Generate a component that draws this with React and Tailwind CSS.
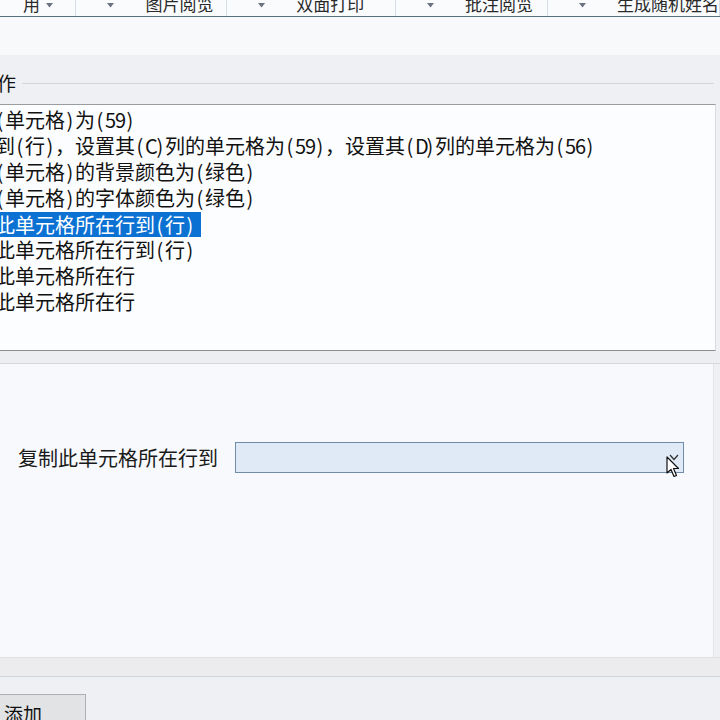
import React from 'react';

const FONT = { fontFamily: '"Noto Sans CJK SC", "Noto Sans", sans-serif' };

const Arrow = () => (
  <svg width="7" height="5" viewBox="0 0 7 5" className="shrink-0">
    <path d="M0 0 L7 0 L3.5 4.5 Z" fill="#6b7280" />
  </svg>
);

const headerCells = [
  { w: 'w-[77px]', text: '用', first: true },
  { w: 'w-[152px]', text: '图片阅览' },
  { w: 'w-[170px]', text: '双面打印' },
  { w: 'w-[153px]', text: '批注阅览' },
  { w: 'flex-1', text: '生成随机姓名' },
];

const items = [
  '(单元格)为(59)',
  '到(行)，设置其(C)列的单元格为(59)，设置其(D)列的单元格为(56)',
  '(单元格)的背景颜色为(绿色)',
  '(单元格)的字体颜色为(绿色)',
  '此单元格所在行到(行)',
  '此单元格所在行到(行)',
  '此单元格所在行',
  '此单元格所在行',
];

// half-width chars take half a cell, like the old dialog font
const renderText = (t) =>
  Array.from(t).map((ch, i) =>
    ch.charCodeAt(0) < 128 ? (
      <span key={i} className="inline-block w-[10px] text-center leading-[22px]">{ch}</span>
    ) : (
      <span key={i} className="inline-block leading-[22px]">{ch}</span>
    )
  );

const Cursor = () => (
  <svg width="14" height="22" viewBox="0 0 14 22" className="absolute left-[430px] top-[13px]">
    <path
      d="M1 1 L1 17 L5 13.5 L8 20.5 L10.5 19.5 L7.5 12.5 L12.5 12.5 Z"
      fill="#ffffff"
      stroke="#111111"
      strokeWidth="1.2"
      strokeLinejoin="round"
    />
  </svg>
);

export default function App() {
  return (
    <div className="w-[720px] h-[720px] overflow-hidden bg-[#eef0f3] text-[#111]" style={FONT}>
      {/* toolbar header */}
      <div className="h-[17px] flex bg-[#f9fbfd] border-b border-[#55707e] overflow-hidden">
        {headerCells.map((c, i) => (
          <div
            key={i}
            className={`${c.w} h-full flex items-start border-r border-[#d5dce3] text-[17px] leading-[17px] text-[#2a2a2a]`}
          >
            {c.first ? (
              <div className="flex items-center -mt-[5px] pl-[23px]">
                <span>{c.text}</span>
                <span className="ml-[6px] mt-[4px]"><Arrow /></span>
              </div>
            ) : (
              <div className="flex items-center -mt-[5px] pl-[31px] whitespace-nowrap">
                <span className="mt-[4px]"><Arrow /></span>
                <span className="ml-[31px]">{c.text}</span>
              </div>
            )}
          </div>
        ))}
      </div>

      <div className="h-[38px] bg-[#f7f9fb]" />

      {/* group box label */}
      <div className="h-[49px] pt-[7px] flex items-center">
        <span className="text-[19px] leading-[20px] -ml-[3px]">作</span>
        <div className="flex-1 ml-[6px] mr-[6px] h-px bg-[#d2d5d9]" />
      </div>

      {/* listbox */}
      <div className="w-[716px] h-[247px] bg-[#fcfdfe] border-t border-b border-r border-t-[#9a9c9f] border-b-[#8b8d90] border-r-[#d9dbde] pt-[2px] overflow-hidden">
        {items.map((t, i) => (
          <div key={i} className="h-[26px] flex items-center text-[20px] leading-[22px] whitespace-nowrap">
            <span
              className={`-ml-[5px] pr-[6px] flex items-center ${
                i === 4 ? 'bg-[#0b72d3] text-white h-[25px] mt-[1px]' : ''
              }`}
            >
              {renderText(t)}
            </span>
          </div>
        ))}
      </div>

      <div className="h-[13px] bg-[#eceef1] border-b border-[#d6d8db]" />

      {/* lower panel */}
      <div className="h-[293px] bg-[#f7f9fc] pt-[78px] border-r border-[#e2e4e7] w-[714px]">
        <div className="h-[31px] flex items-center">
          <span className="ml-[18px] text-[20px] leading-[24px] text-[#1a1a1a]">复制此单元格所在行到</span>
          <div className="relative ml-[17px] w-[449px] h-[31px] bg-[#dfeaf6] border border-[#6f8ca9]">
            <svg width="10" height="7" viewBox="0 0 10 7" className="absolute left-[433px] top-[11px]">
              <path d="M1 1 L5 5.5 L9 1" fill="none" stroke="#333" strokeWidth="1.3" />
            </svg>
            <Cursor />
          </div>
        </div>
      </div>

      <div className="h-[20px] bg-[#ececef] border-t border-b border-t-[#dfe1e4] border-b-[#d3d4d7]" />

      <div className="pt-[17px]">
        <div className="w-[87px] h-[30px] bg-[#e2e3e5] border border-[#adafb2] -ml-[1px] pl-[4px] pt-[9px] text-[19px] leading-[20px]">
          添加
        </div>
      </div>
    </div>
  );
}
